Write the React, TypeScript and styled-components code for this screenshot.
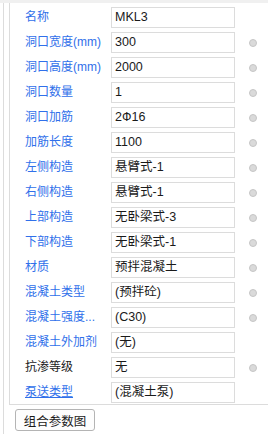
import styled, { createGlobalStyle } from "styled-components"

const Global = createGlobalStyle`
  html, body {
    margin: 0;
    padding: 0;
    background: #ffffff;
  }
  body {
    font-family: "Microsoft YaHei", "Liberation Sans", "Noto Sans CJK SC", sans-serif;
  }
`

type Param = {
  label: string
  value: string
  dot?: boolean
  black?: boolean
  link?: boolean
}

const params: Param[] = [
  { label: "名称", value: "MKL3" },
  { label: "洞口宽度(mm)", value: "300", dot: true },
  { label: "洞口高度(mm)", value: "2000", dot: true },
  { label: "洞口数量", value: "1", dot: true },
  { label: "洞口加筋", value: "2Ф16", dot: true },
  { label: "加筋长度", value: "1100", dot: true },
  { label: "左侧构造", value: "悬臂式-1", dot: true },
  { label: "右侧构造", value: "悬臂式-1", dot: true },
  { label: "上部构造", value: "无卧梁式-3", dot: true },
  { label: "下部构造", value: "无卧梁式-1", dot: true },
  { label: "材质", value: "预拌混凝土", dot: true },
  { label: "混凝土类型", value: "(预拌砼)", dot: true },
  { label: "混凝土强度...", value: "(C30)", dot: true },
  { label: "混凝土外加剂", value: "(无)" },
  { label: "抗渗等级", value: "无", dot: true, black: true },
  { label: "泵送类型", value: "(混凝土泵)", link: true },
]

const App = () => {
  return (
    <>
      <Global />
      <TopStrip />
      <Outer>
        <Panel>
          {params.map((p) => (
            <Row key={p.label}>
              <Label $black={p.black} $link={p.link}>{p.label}</Label>
              <Field>{p.value}</Field>
              <DotCell>{p.dot && <Dot />}</DotCell>
            </Row>
          ))}
        </Panel>
        <Footer>
          <Button>组合参数图</Button>
        </Footer>
      </Outer>
    </>
  )
}

export default App

const TopStrip = styled.div`
  height: 3px;
  background: #f0f0f0;
`

const Outer = styled.div`
  margin-left: 3px;
  border-left: 1px solid #dcdcdc;
  height: 431px;
  box-sizing: border-box;
`

const Panel = styled.div`
  margin-left: 5px;
  border-left: 1px solid #dcdcdc;
  border-bottom: 1px solid #dcdcdc;
  padding: 4px 0 1px 15px;
  display: flex;
  flex-direction: column;
  gap: 4px;
`

const Row = styled.div`
  display: grid;
  grid-template-columns: 86px 124px 1fr;
  align-items: center;
  height: 21px;
`

const Label = styled.span<{ $black?: boolean; $link?: boolean }>`
  font-size: 12px;
  line-height: 21px;
  color: ${(p) => (p.$black ? "#1a1a1a" : "#3070ea")};
  text-decoration: ${(p) => (p.$link ? "underline" : "none")};
  white-space: nowrap;
`

const Field = styled.div`
  box-sizing: border-box;
  height: 21px;
  border: 1px solid #dcdcdc;
  padding-left: 3px;
  font-size: 12.5px;
  line-height: 19px;
  color: #1a1a1a;
  white-space: nowrap;
  overflow: hidden;
`

const DotCell = styled.div`
  display: flex;
  justify-content: center;
  padding-left: 2px;
`

const Dot = styled.span`
  width: 8px;
  height: 8px;
  border-radius: 50%;
  background: #dadada;
  border: 1px solid #c6c6c6;
  box-sizing: border-box;
`

const Footer = styled.div`
  padding: 4px 0 0 11px;
`

const Button = styled.button`
  box-sizing: border-box;
  width: 80px;
  height: 22px;
  border: 1px solid #b4b4b4;
  border-radius: 3px;
  background: #fdfdfd;
  font-family: inherit;
  font-size: 12.5px;
  color: #1a1a1a;
  padding: 0;
`
